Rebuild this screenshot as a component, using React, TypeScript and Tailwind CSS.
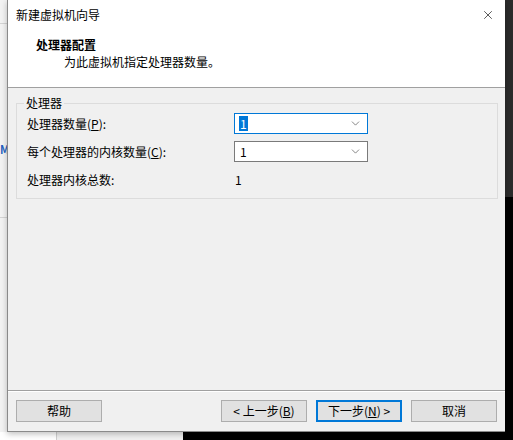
import { ChevronDown, X } from "lucide-react"

const font = { fontFamily: '"Noto Sans CJK SC", "Microsoft YaHei", sans-serif' }

function Combo({ value, focused }: { value: string; focused?: boolean }) {
  return (
    <div
      className={`flex h-[21px] w-[134px] items-center justify-between bg-white pl-[4px] pr-[5px] ${
        focused ? "border border-[#0078d7]" : "border border-[#7a7a7a]"
      }`}
    >
      {focused ? (
        <span className="bg-[#0078d7] px-[1px] leading-[15px] text-white">{value}</span>
      ) : (
        <span className="px-[1px] leading-[15px]">{value}</span>
      )}
      <ChevronDown className="h-[13px] w-[13px] text-[#555]" strokeWidth={1.3} />
    </div>
  )
}

function Btn({ children, primary }: { children: React.ReactNode; primary?: boolean }) {
  return (
    <div
      className={`flex h-[22px] w-[86px] items-center justify-center bg-[#e1e1e1] ${
        primary ? "border-2 border-[#0078d7]" : "border border-[#adadad]"
      }`}
    >
      {children}
    </div>
  )
}

export default function App() {
  return (
    <div className="relative h-[440px] w-[513px] overflow-hidden bg-black text-[12px] text-black" style={font}>
      {/* windows behind the dialog */}
      <div className="absolute left-0 top-0 h-[440px] w-[7px] bg-[#f3f3f3]">
        <div className="mt-[23px] h-px bg-[#d4d4d4]" />
        <div className="mt-[120px] text-[11px] font-bold leading-none text-[#1f5fbf]">M</div>
        <div className="mt-[62px] h-px bg-[#d4d4d4]" />
      </div>
      <div className="absolute left-[505px] top-0 h-[197px] w-[8px] bg-[#2b2b2b]" />
      <div className="absolute left-0 top-[432px] flex h-[8px] w-[183px]">
        <div className="w-[56px] bg-white" />
        <div className="w-px bg-[#cfcfcf]" />
        <div className="flex-1 bg-[#f0f0f0]" />
      </div>

      {/* dialog */}
      <div className="absolute left-[7px] top-0 flex h-[432px] w-[498px] flex-col border-l border-b border-[#8a8a8a] bg-[#f0f0f0] shadow-[0_2px_6px_rgba(0,0,0,0.25)]">
        <div className="flex h-[87px] flex-col bg-white">
          <div className="flex h-[30px] items-center justify-between pl-[8px] pr-[10px]">
            <span>新建虚拟机向导</span>
            <X className="h-[14px] w-[14px]" strokeWidth={1.1} />
          </div>
          <div className="pl-[28px] pt-[6px] font-bold leading-[18px]">处理器配置</div>
          <div className="pl-[56px] leading-[16px]">为此虚拟机指定处理器数量。</div>
        </div>
        <div className="h-px bg-[#a0a0a0]" />

        <div className="flex-1 px-[8px] pt-[8px]">
          <fieldset className="h-[103px] w-[482px] border border-[#dcdcdc] px-[10px] pt-0">
            <legend className="ml-[-3px] px-[2px] leading-[14px]">处理器</legend>
            <div className="mt-[3px] flex items-center">
              <span className="w-[207px]">
                处理器数量(<u>P</u>):
              </span>
              <Combo value="1" focused />
            </div>
            <div className="mt-[7px] flex items-center">
              <span className="w-[207px]">
                每个处理器的内核数量(<u>C</u>):
              </span>
              <Combo value="1" />
            </div>
            <div className="mt-[9px] flex items-center">
              <span className="w-[208px]">处理器内核总数:</span>
              <span>1</span>
            </div>
          </fieldset>
        </div>

        <div className="h-px bg-[#a0a0a0]" />
        <div className="h-px bg-white" />
        <div className="flex h-[39px] items-start pl-[8px] pt-[8px]">
          <Btn>帮助</Btn>
          <div className="ml-[119px] flex gap-[9px]">
            <Btn>
              &lt; 上一步(<u>B</u>)
            </Btn>
            <Btn primary>
              下一步(<u>N</u>) &gt;
            </Btn>
            <Btn>取消</Btn>
          </div>
        </div>
      </div>
    </div>
  )
}
